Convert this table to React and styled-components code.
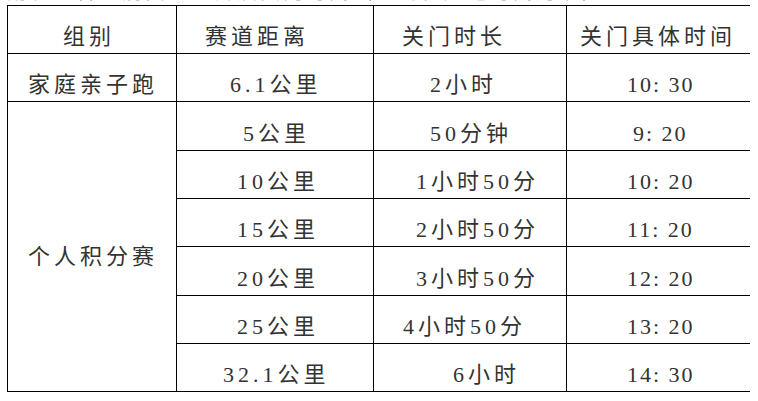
import styled, { createGlobalStyle } from 'styled-components';

const GlobalStyle = createGlobalStyle`
  html, body {
    margin: 0;
    padding: 0;
    background: #ffffff;
  }
  body {
    font-family: "Liberation Serif", "Noto Sans CJK SC", serif;
    color: #333333;
  }
`;

const rows = [
  {
    height: 48,
    cells: [
      { text: '家庭亲子跑', pad: 20 },
      { text: '6.1公里', pad: 53 },
      { text: '2小时', pad: 56 },
      { text: '10: 30', pad: 60, time: true },
    ],
  },
  {
    height: 49,
    cells: [
      { text: '5公里', pad: 66 },
      { text: '50分钟', pad: 56 },
      { text: '9: 20', pad: 66, time: true },
    ],
  },
  {
    height: 48,
    cells: [
      { text: '10公里', pad: 60 },
      { text: '1小时50分', pad: 42 },
      { text: '10: 20', pad: 60, time: true },
    ],
  },
  {
    height: 48,
    cells: [
      { text: '15公里', pad: 60 },
      { text: '2小时50分', pad: 42 },
      { text: '11: 20', pad: 60, time: true },
    ],
  },
  {
    height: 49,
    cells: [
      { text: '20公里', pad: 60 },
      { text: '3小时50分', pad: 42 },
      { text: '12: 20', pad: 60, time: true },
    ],
  },
  {
    height: 48,
    cells: [
      { text: '25公里', pad: 60 },
      { text: '4小时50分', pad: 29 },
      { text: '13: 20', pad: 60, time: true },
    ],
  },
  {
    height: 48,
    cells: [
      { text: '32.1公里', pad: 46 },
      { text: '6小时', pad: 79 },
      { text: '14: 30', pad: 60, time: true },
    ],
  },
];

export default function App() {
  return (
    <>
      <GlobalStyle />
      <Page>
        <CutLine>
          <span>附表：各组别赛道距离及关门时间（以鸣枪起跑时间为准）</span>
        </CutLine>
        <Table>
          <colgroup>
            <col style={{ width: 169 }} />
            <col style={{ width: 197 }} />
            <col style={{ width: 193 }} />
            <col style={{ width: 183 }} />
          </colgroup>
          <tbody>
            <Row $h={48}>
              <Head $pad={55}>组别</Head>
              <Head $pad={28}>赛道距离</Head>
              <Head $pad={28}>关门时长</Head>
              <Head $pad={13}>关门具体时间</Head>
            </Row>
            {rows.map((row, i) => (
              <Row key={i} $h={row.height}>
                {i === 1 && (
                  <GroupCell rowSpan={6} $pad={20}>
                    个人积分赛
                  </GroupCell>
                )}
                {row.cells.map((c, j) => (
                  <Cell key={j} $pad={c.pad} $time={c.time}>
                    {c.text}
                  </Cell>
                ))}
              </Row>
            ))}
          </tbody>
        </Table>
      </Page>
    </>
  );
}

const Page = styled.div`
  width: 758px;
  height: 401px;
  overflow: hidden;
  padding-left: 7px;
  padding-top: 3px;
  box-sizing: border-box;
`;

/* bottom edge of the previous line of the document, cut by the crop */
const CutLine = styled.div`
  height: 2px;
  margin-top: -3px;
  margin-bottom: 3px;
  overflow: hidden;
  font-size: 20px;
  line-height: 20px;
  color: #9a9a9a;
  letter-spacing: 3px;

  span {
    display: block;
    margin-top: -18px;
  }
`;

const Table = styled.table`
  border-collapse: collapse;
  table-layout: fixed;
  width: 742px;
  font-size: 22px;
  letter-spacing: 4px;
`;

const Row = styled.tr`
  height: ${(p) => p.$h}px;
`;

const Cell = styled.td`
  border: 1px solid #000;
  border-right: ${(p) => (p.$time ? 'none' : '1px solid #000')};
  padding: 0 0 4px ${(p) => p.$pad}px;
  vertical-align: bottom;
  text-align: left;
  line-height: 24px;
  white-space: nowrap;
  letter-spacing: ${(p) => (p.$time ? '2px' : '4px')};
`;

const Head = styled(Cell)`
  &:last-child {
    border-right: none;
  }
`;

const GroupCell = styled(Cell)`
  vertical-align: middle;
  padding-top: 20px;
  padding-bottom: 0;
`;
